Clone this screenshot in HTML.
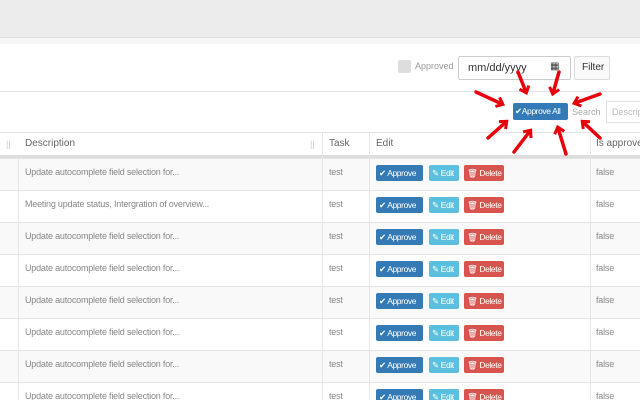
<!DOCTYPE html>
<html><head><style>
*{margin:0;padding:0;box-sizing:border-box}
html,body{width:640px;height:400px;overflow:hidden}
body{background:#fff;font-family:"Liberation Sans",sans-serif;position:relative;color:#555;white-space:nowrap}
.abs{position:absolute;line-height:1}
.row{position:absolute;left:0;width:640px;height:32px;border-top:1px solid #e4e4e4}
.row.g{background:#f9f9f9}
.t{position:absolute;font-size:9px;color:#888;top:9px;line-height:1;letter-spacing:-0.2px}
.btn{position:absolute;top:6px;height:16px;border-radius:2px;color:#fff;font-size:8.5px;line-height:16px;padding-left:3px;white-space:nowrap;overflow:hidden;letter-spacing:-0.4px}
.ap{left:376px;width:47px;background:#337ab7}
.ed{left:429px;width:30px;background:#5bc0de}
.de{left:464px;width:40px;background:#d9534f}
.vl{position:absolute;top:132px;width:1px;height:268px;background:#e6e6e6}
</style></head><body>
<div class="abs" style="left:0;top:0;width:640px;height:37px;background:#ececec"></div>
<div class="abs" style="left:0;top:37px;width:640px;height:7px;background:#f6f6f6;border-top:1px solid #e0e0e0"></div>
<div class="abs" style="left:0;top:91px;width:640px;height:1px;background:#e2e2e2"></div>
<div class="abs" style="left:398px;top:60px;width:13px;height:13px;background:#ddd;border-radius:2px"></div>
<div class="abs" style="left:415px;top:62px;font-size:9px;color:#999">Approved</div>
<div class="abs" style="left:458px;top:56px;width:113px;height:24px;border:1px solid #ccc;border-radius:2px;font-size:11px;color:#333;padding:6px 0 0 9px">mm/dd/yyyy<span style="position:absolute;left:91px;top:5px;font-size:10px">▦</span></div>
<div class="abs" style="left:574px;top:56px;width:36px;height:24px;border:1px solid #ddd;border-radius:2px;font-size:10px;color:#333;padding:6px 0 0 7px;background:#fafafa">Filter</div>
<div class="abs" style="left:513px;top:103px;width:55px;height:17px;background:#337ab7;border-radius:2px;color:#fff;font-size:8.5px;line-height:17px;padding-left:2px;letter-spacing:-0.4px;overflow:hidden">✔Approve All</div>
<div class="abs" style="left:572px;top:108px;font-size:9px;color:#aaa">Search</div>
<div class="abs" style="left:606px;top:101px;width:40px;height:22px;border:1px solid #ddd;border-radius:2px;font-size:9px;color:#bbb;padding:6px 0 0 5px">Descrip</div>
<div class="abs" style="left:0;top:132px;width:640px;height:1px;background:#e2e2e2"></div>
<div class="abs" style="left:0;top:155px;width:640px;height:3px;background:#ddd"></div>
<div class="abs" style="left:6px;top:140px;font-size:9px;color:#ccc">||</div>
<div class="abs" style="left:25px;top:139px;font-size:10px;color:#666">Description</div>
<div class="abs" style="left:310px;top:140px;font-size:9px;color:#ccc">||</div>
<div class="abs" style="left:329px;top:139px;font-size:10px;color:#666">Task</div>
<div class="abs" style="left:376px;top:139px;font-size:10px;color:#666">Edit</div>
<div class="abs" style="left:596px;top:139px;font-size:10px;color:#666">Is approved</div>

<div class="row g" style="top:158px"><span class="t" style="left:25px">Update autocomplete field selection for...</span><span class="t" style="left:329px">test</span><span class="btn ap">✔ Approve</span><span class="btn ed">✎ Edit</span><span class="btn de">🗑 Delete</span><span class="t" style="left:596px">false</span></div>
<div class="row" style="top:190px"><span class="t" style="left:25px">Meeting update status, Intergration of overview...</span><span class="t" style="left:329px">test</span><span class="btn ap">✔ Approve</span><span class="btn ed">✎ Edit</span><span class="btn de">🗑 Delete</span><span class="t" style="left:596px">false</span></div>
<div class="row g" style="top:222px"><span class="t" style="left:25px">Update autocomplete field selection for...</span><span class="t" style="left:329px">test</span><span class="btn ap">✔ Approve</span><span class="btn ed">✎ Edit</span><span class="btn de">🗑 Delete</span><span class="t" style="left:596px">false</span></div>
<div class="row" style="top:254px"><span class="t" style="left:25px">Update autocomplete field selection for...</span><span class="t" style="left:329px">test</span><span class="btn ap">✔ Approve</span><span class="btn ed">✎ Edit</span><span class="btn de">🗑 Delete</span><span class="t" style="left:596px">false</span></div>
<div class="row g" style="top:286px"><span class="t" style="left:25px">Update autocomplete field selection for...</span><span class="t" style="left:329px">test</span><span class="btn ap">✔ Approve</span><span class="btn ed">✎ Edit</span><span class="btn de">🗑 Delete</span><span class="t" style="left:596px">false</span></div>
<div class="row" style="top:318px"><span class="t" style="left:25px">Update autocomplete field selection for...</span><span class="t" style="left:329px">test</span><span class="btn ap">✔ Approve</span><span class="btn ed">✎ Edit</span><span class="btn de">🗑 Delete</span><span class="t" style="left:596px">false</span></div>
<div class="row g" style="top:350px"><span class="t" style="left:25px">Update autocomplete field selection for...</span><span class="t" style="left:329px">test</span><span class="btn ap">✔ Approve</span><span class="btn ed">✎ Edit</span><span class="btn de">🗑 Delete</span><span class="t" style="left:596px">false</span></div>
<div class="row" style="top:382px;height:18px"><span class="t" style="left:25px">Update autocomplete field selection for...</span><span class="t" style="left:329px">test</span><span class="btn ap">✔ Approve</span><span class="btn ed">✎ Edit</span><span class="btn de">🗑 Delete</span><span class="t" style="left:596px">false</span></div>

<div class="vl" style="left:18px;top:158px;height:242px"></div>
<div class="vl" style="left:322px"></div>
<div class="vl" style="left:369px"></div>
<div class="vl" style="left:590px"></div>

<svg class="abs" style="left:0;top:0" width="640" height="400">
<defs><marker id="a" markerWidth="12" markerHeight="12" refX="6" refY="6" orient="auto" markerUnits="userSpaceOnUse"><path d="M1,1 L7,6 L1,11" fill="none" stroke="#e8000b" stroke-width="3"/></marker></defs>
<g stroke="#e8000b" stroke-width="3.5" fill="none" stroke-linecap="round" marker-end="url(#a)">
<line x1="518" y1="72" x2="526" y2="92"/>
<line x1="559" y1="72" x2="553" y2="93"/>
<line x1="476" y1="92" x2="502" y2="104"/>
<line x1="600" y1="94" x2="575" y2="103"/>
<line x1="488" y1="138" x2="506" y2="122"/>
<line x1="514" y1="152" x2="530" y2="131"/>
<line x1="566" y1="154" x2="558" y2="128"/>
<line x1="600" y1="138" x2="583" y2="122"/>
</g></svg>
</body></html>
